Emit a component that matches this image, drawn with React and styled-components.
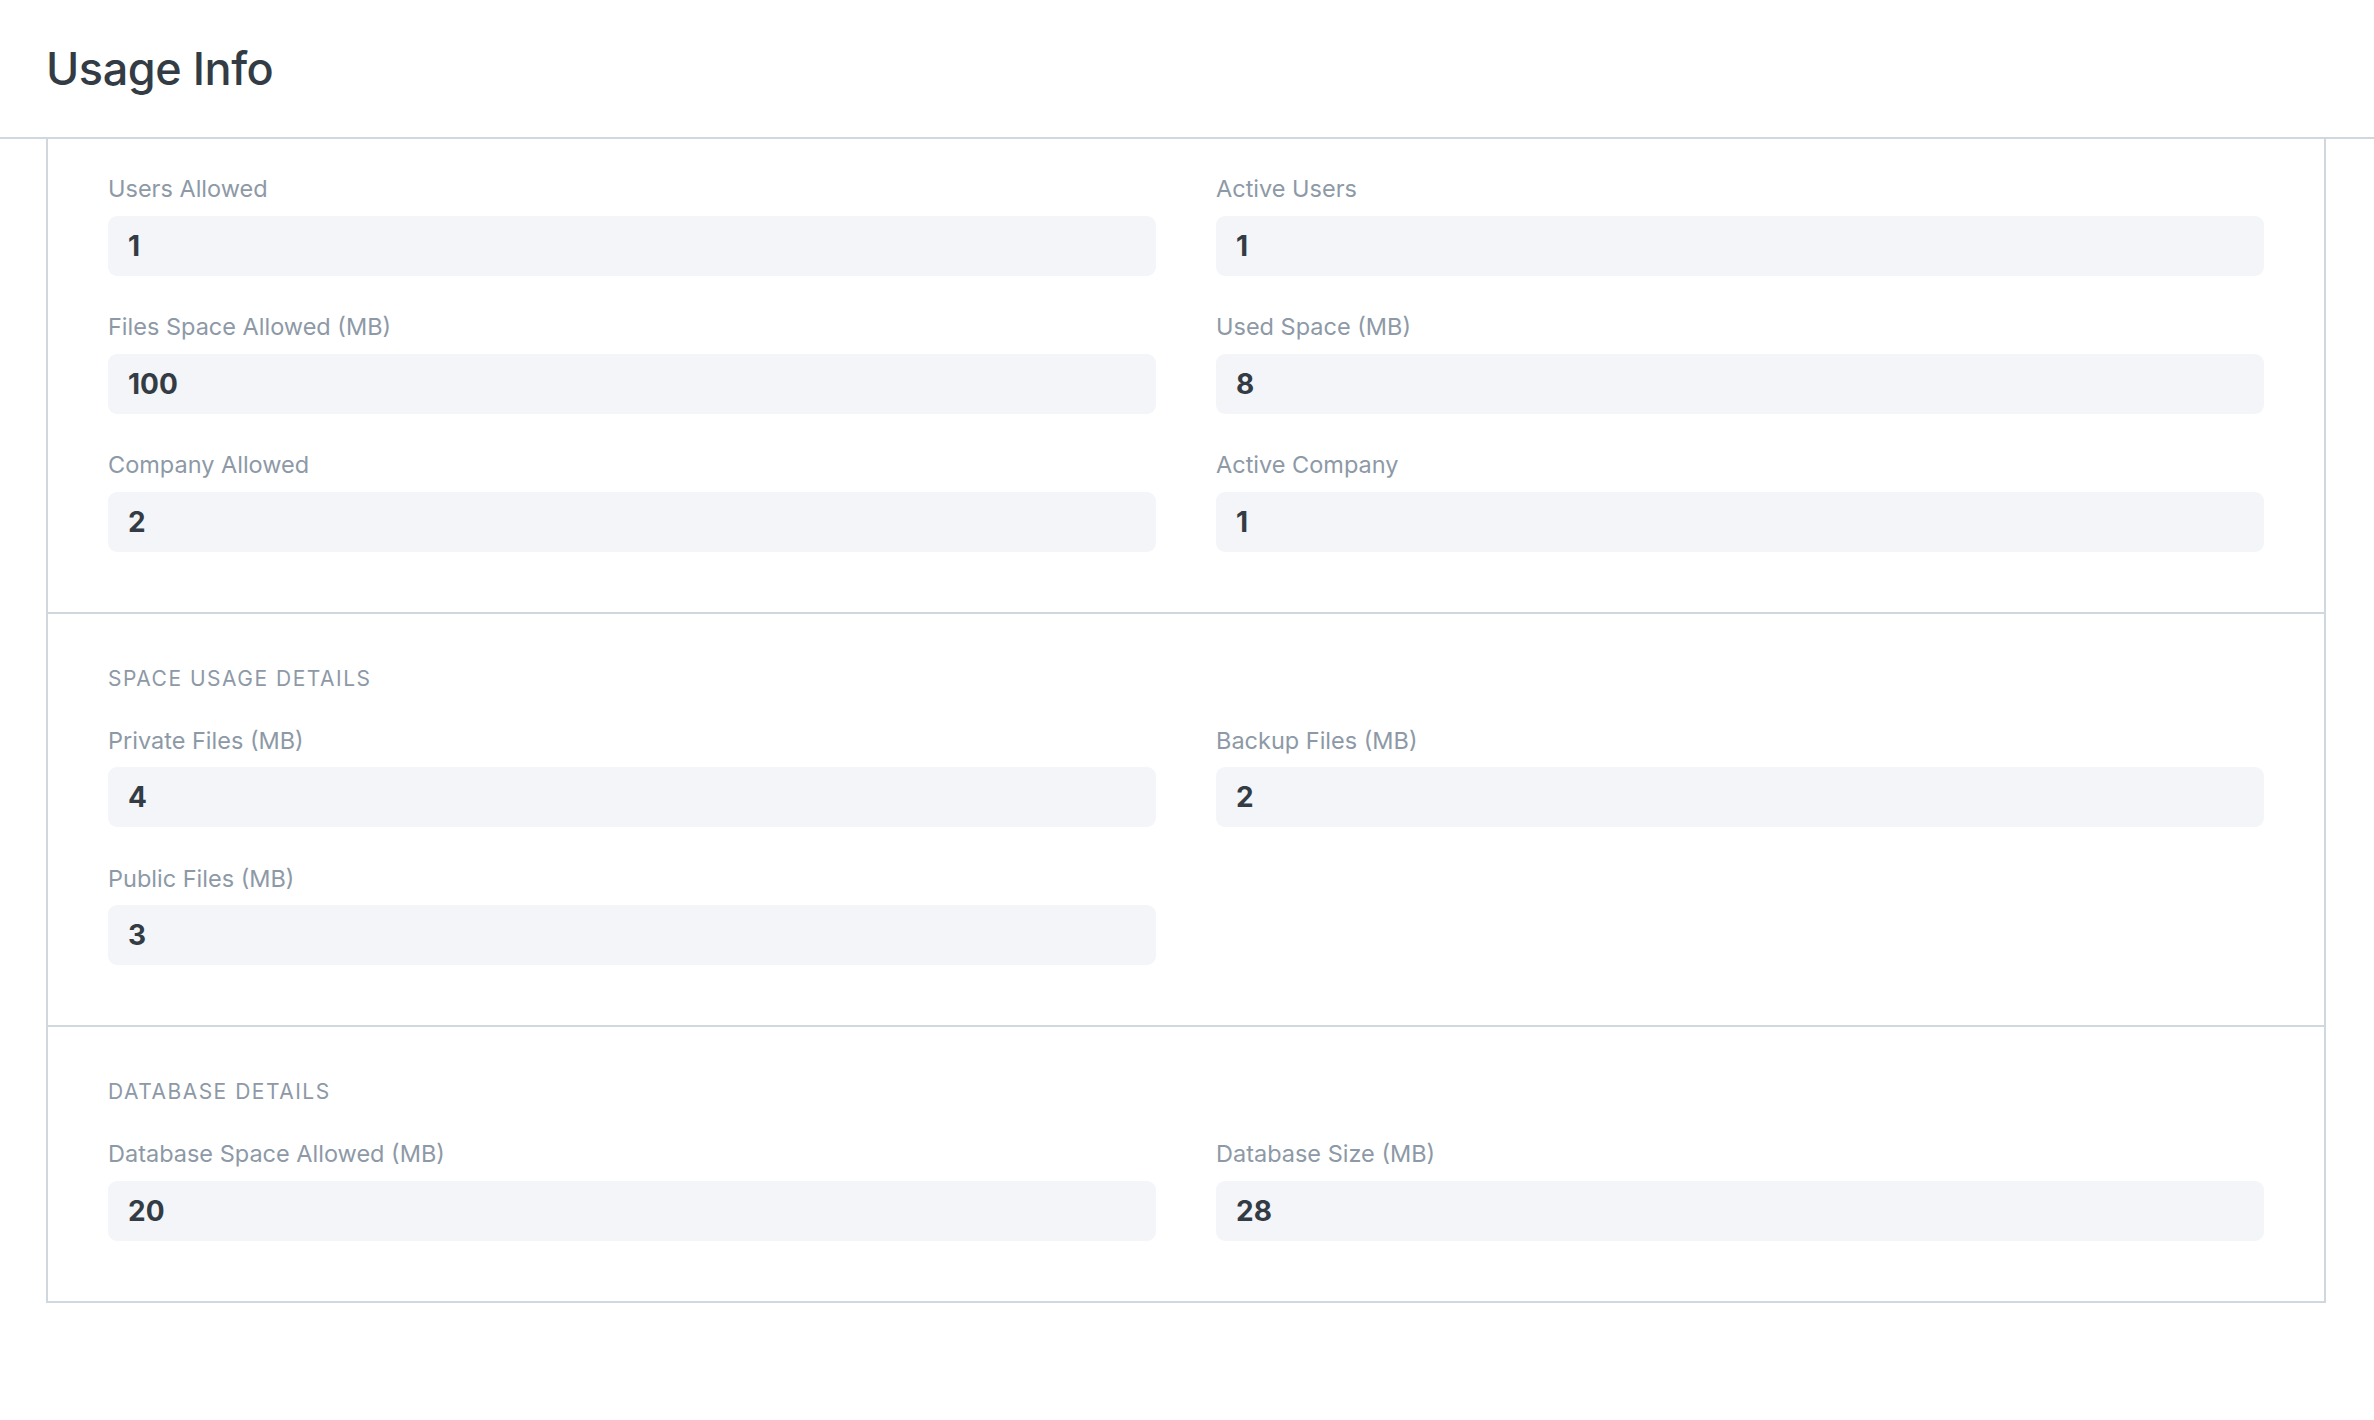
import React from 'react'
import styled, { createGlobalStyle } from 'styled-components'

const sections = [
  {
    fields: [
      { label: 'Users Allowed', value: '1' },
      { label: 'Active Users', value: '1' },
      { label: 'Files Space Allowed (MB)', value: '100' },
      { label: 'Used Space (MB)', value: '8' },
      { label: 'Company Allowed', value: '2' },
      { label: 'Active Company', value: '1' },
    ],
  },
  {
    title: 'Space Usage Details',
    fields: [
      { label: 'Private Files (MB)', value: '4' },
      { label: 'Backup Files (MB)', value: '2' },
      { label: 'Public Files (MB)', value: '3' },
    ],
  },
  {
    title: 'Database Details',
    fields: [
      { label: 'Database Space Allowed (MB)', value: '20' },
      { label: 'Database Size (MB)', value: '28' },
    ],
  },
]

const App = () => {
  return (
    <>
      <GlobalStyle />
      <Page>
        <Header>
          <Title>Usage Info</Title>
        </Header>
        <Card>
          {sections.map((section, i) => (
            <Section key={i} divided={i > 0}>
              {section.title && <SectionTitle>{section.title}</SectionTitle>}
              <Fields>
                {section.fields.map((field) => (
                  <Field key={field.label}>
                    <Label>{field.label}</Label>
                    <Value>{field.value}</Value>
                  </Field>
                ))}
              </Fields>
            </Section>
          ))}
        </Card>
      </Page>
    </>
  )
}

const GlobalStyle = createGlobalStyle`
  html, body {
    margin: 0;
    padding: 0;
    background: #ffffff;
  }
  body {
    font-family: 'Inter', 'Noto Sans', sans-serif;
    color: #333c44;
  }
`

const Page = styled.div`
  min-height: 1420px;
  background: #ffffff;
`

const Header = styled.div`
  height: 137px;
  display: flex;
  align-items: center;
  padding-left: 46px;
  border-bottom: 2px solid #d1d8dd;
`

const Title = styled.h1`
  margin: 0;
  font-size: 45px;
  font-weight: 500;
  letter-spacing: -0.01em;
  color: #333c44;
`

const Card = styled.div`
  margin: 0 48px 0 46px;
  border: 2px solid #d1d8dd;
  border-top: none;
`

const Section = styled.div`
  padding: 33px 60px 60px;
  border-top: ${(p) => (p.divided ? '2px solid #d1d8dd' : 'none')};
`

const SectionTitle = styled.div`
  margin: 17px 0 31px;
  font-size: 21px;
  line-height: 29px;
  text-transform: uppercase;
  letter-spacing: 1.5px;
  color: #8d99a6;
`

const Fields = styled.div`
  display: grid;
  grid-template-columns: 1fr 1fr;
  column-gap: 60px;
  row-gap: 34.5px;
`

const Field = styled.div`
  display: flex;
  flex-direction: column;
`

const Label = styled.div`
  font-size: 23.5px;
  line-height: 34px;
  margin-bottom: 9.5px;
  color: #8d99a6;
`

const Value = styled.div`
  height: 60px;
  display: flex;
  align-items: center;
  padding: 0 20px;
  border-radius: 9px;
  background: #f4f5f8;
  font-size: 28px;
  font-weight: 700;
  color: #333c44;
`

export default App
